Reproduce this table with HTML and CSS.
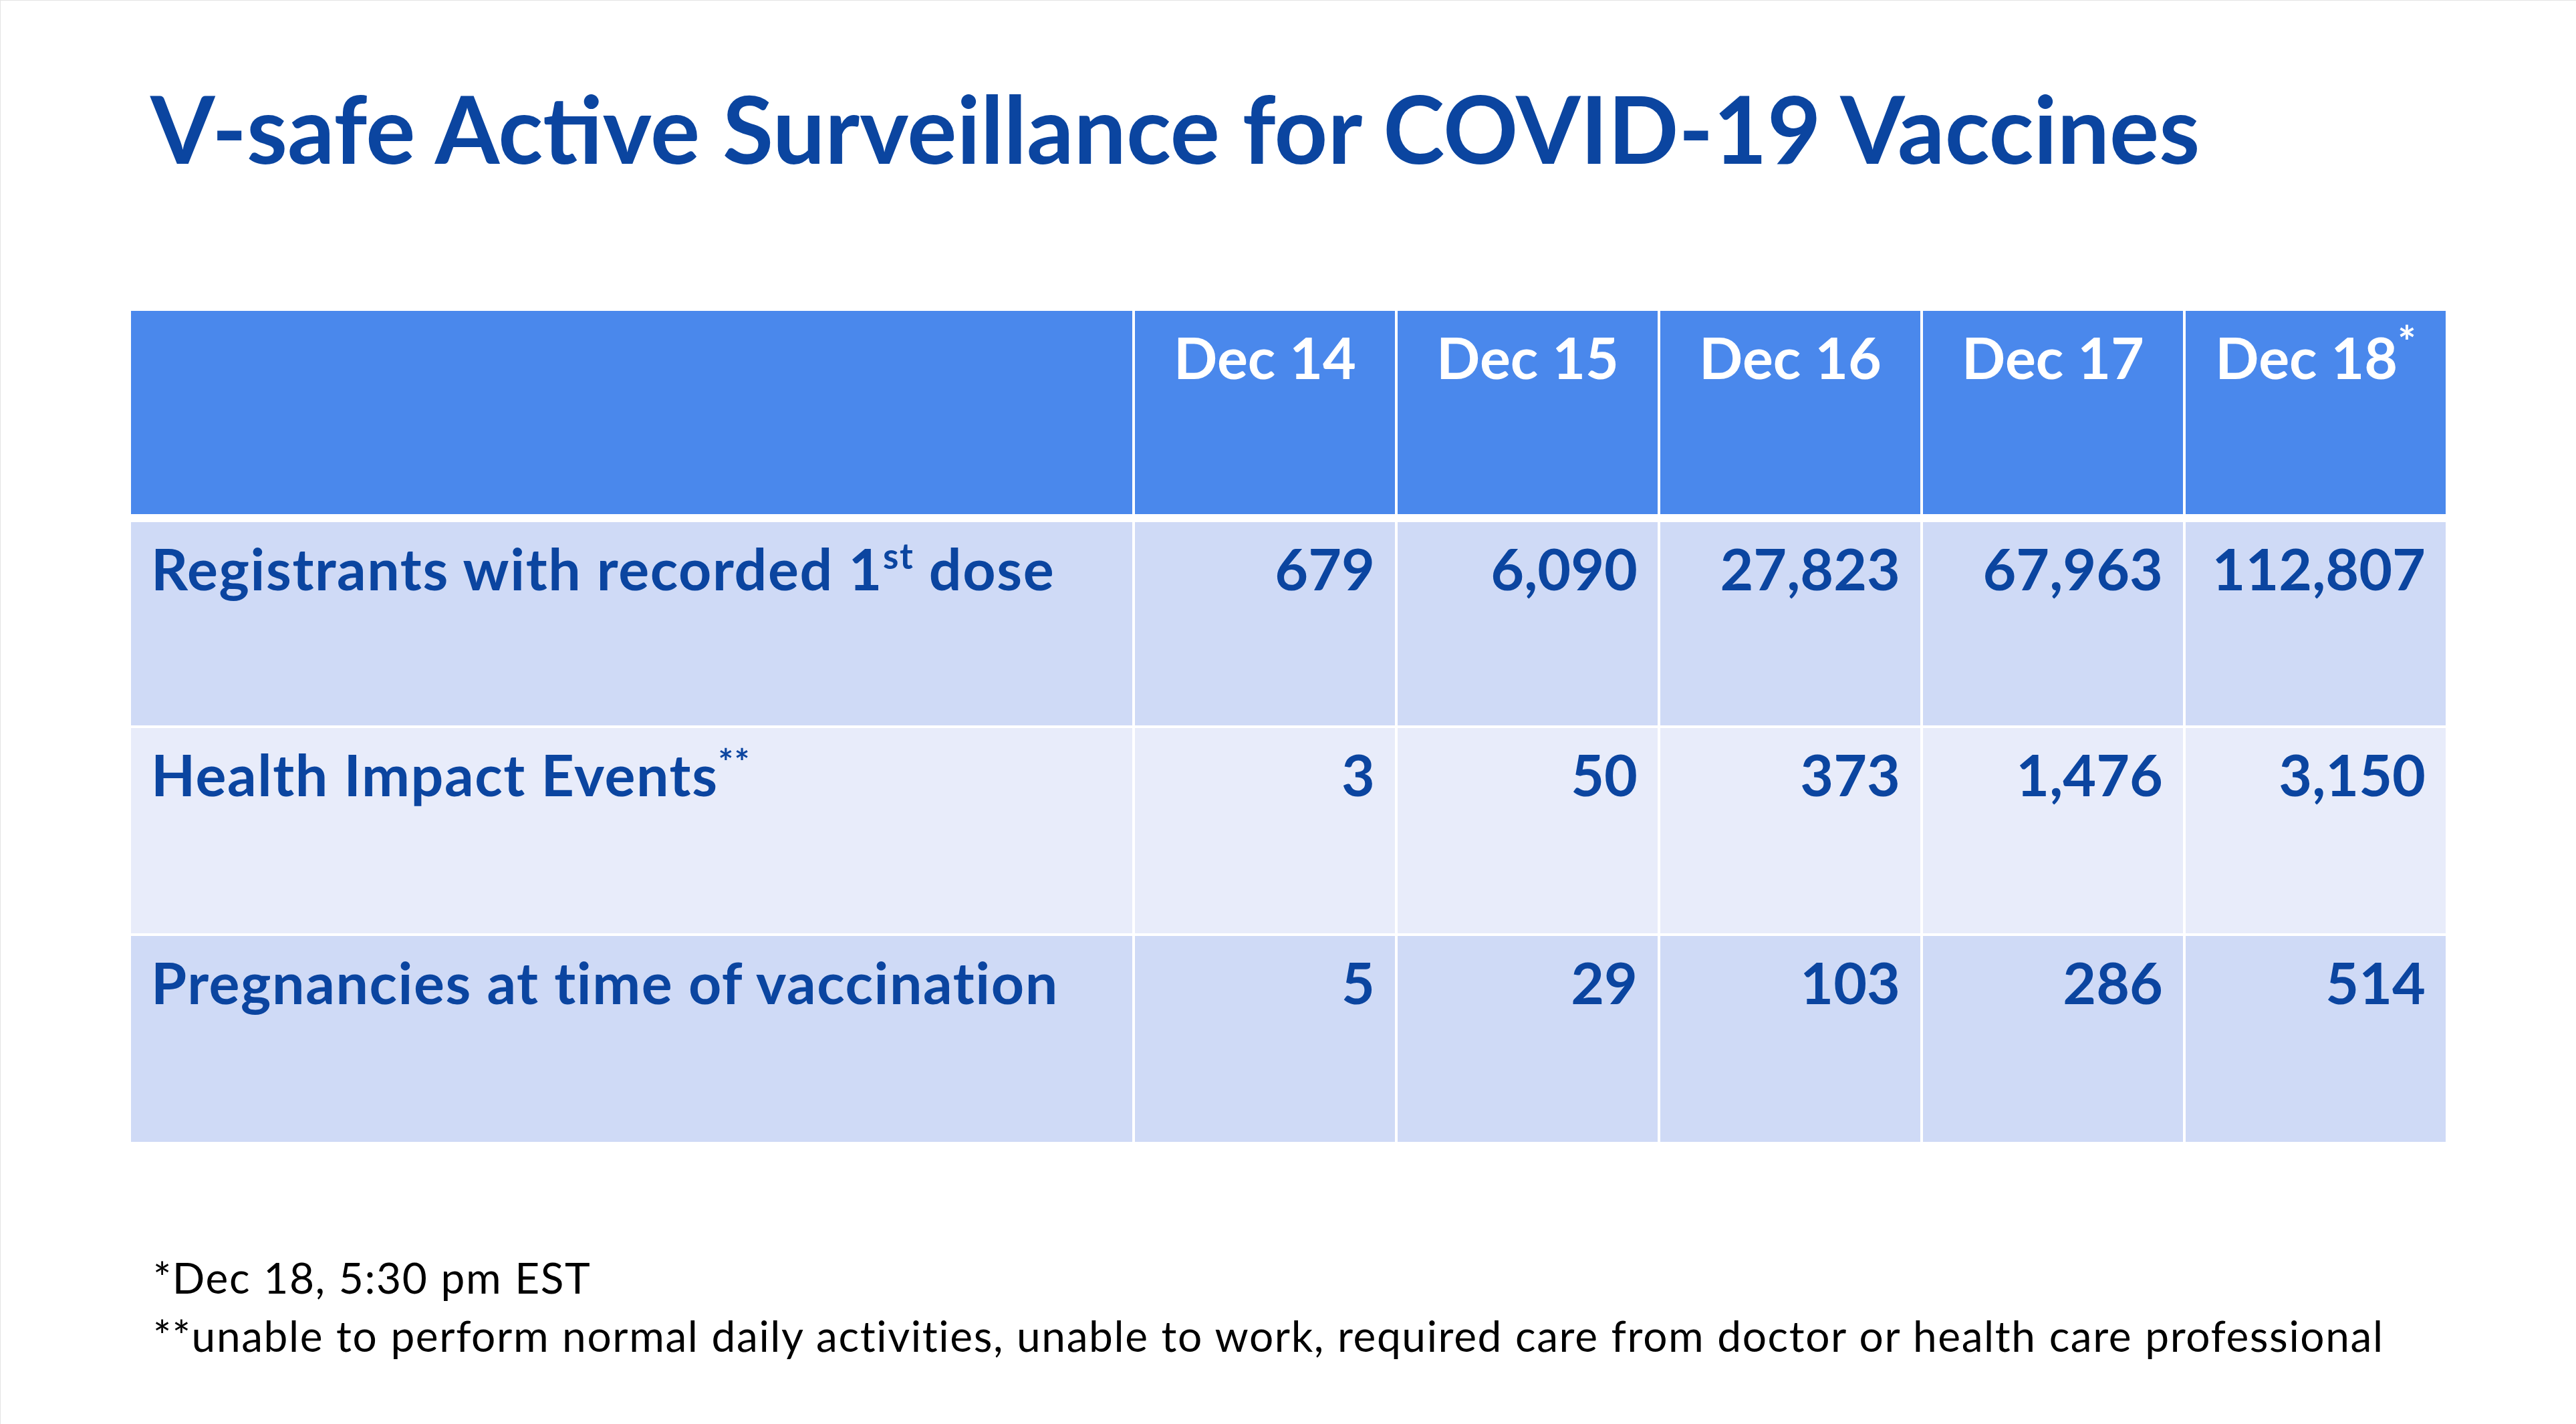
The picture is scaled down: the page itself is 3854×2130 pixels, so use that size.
FILE: index.html
```html
<!DOCTYPE html>
<html lang="en">
<head>
<meta charset="utf-8">
<title>V-safe Active Surveillance for COVID-19 Vaccines</title>
<link rel="stylesheet" href="styles.css">
</head>
<body>
<div class="slide">
  <h1 class="title">V-safe Active Surveillance for COVID-19 Vaccines</h1>
  <div class="table">
    <div class="row head">
      <div class="cell label"></div>
      <div class="cell">Dec 14</div>
      <div class="cell">Dec 15</div>
      <div class="cell">Dec 16</div>
      <div class="cell">Dec 17</div>
      <div class="cell">Dec 18<sup>*</sup></div>
    </div>
    <div class="row body r1">
      <div class="cell label">Registrants with recorded 1<sup>st</sup> dose</div>
      <div class="cell num">679</div>
      <div class="cell num">6,090</div>
      <div class="cell num">27,823</div>
      <div class="cell num">67,963</div>
      <div class="cell num">112,807</div>
    </div>
    <div class="row body r2">
      <div class="cell label">Health Impact Events<sup>**</sup></div>
      <div class="cell num">3</div>
      <div class="cell num">50</div>
      <div class="cell num">373</div>
      <div class="cell num">1,476</div>
      <div class="cell num">3,150</div>
    </div>
    <div class="row body r3">
      <div class="cell label">Pregnancies at time of vaccination</div>
      <div class="cell num">5</div>
      <div class="cell num">29</div>
      <div class="cell num">103</div>
      <div class="cell num">286</div>
      <div class="cell num">514</div>
    </div>
  </div>
  <div class="notes">
    <p>*Dec 18, 5:30 pm EST</p>
    <p>**unable to perform normal daily activities, unable to work, required care from doctor or health care professional</p>
  </div>
</div>
</body>
</html>
```

FILE: styles.css
```css
html, body {
  margin: 0;
  padding: 0;
  background: #ffffff;
}

.slide {
  width: 3854px;
  height: 2130px;
  box-sizing: border-box;
  border-top: 1px solid #e4e4e4;
  border-left: 1px solid #e4e4e4;
  padding-top: 110px;
  font-family: "Lato", "Noto Sans", sans-serif;
  overflow: hidden;
}

.title {
  margin: 0 0 0 224px;
  font-size: 139px;
  line-height: 162px;
  font-weight: 700;
  color: #0b45a0;
}

.table {
  margin: 192px 0 0 195px;
  width: 3463px;
  display: flex;
  flex-direction: column;
  gap: 4px;
  background: #ffffff;
}

.row {
  display: grid;
  grid-template-columns: 1498px repeat(5, 1fr);
  column-gap: 4px;
  height: 304px;
}

.row.head {
  margin-bottom: 8px;
}

.row.r2 { height: 307px; }
.row.r3 { height: 308px; }

.cell {
  box-sizing: border-box;
  padding: 17px 30px 0 30px;
  font-size: 86px;
  line-height: 103px;
  font-weight: 700;
  white-space: nowrap;
}

.cell.label {
  letter-spacing: 1.6px;
}

.head .cell {
  background: #4a88ec;
  color: #ffffff;
  text-align: center;
  padding-left: 0;
  padding-right: 0;
}

.r1 .cell, .r3 .cell {
  background: #cfdaf6;
  color: #0b45a0;
}

.r2 .cell {
  background: #e8ecfa;
  color: #0b45a0;
}

.cell.num {
  text-align: right;
}

.cell sup {
  font-size: 0.62em;
  line-height: 0;
  vertical-align: 0.6em;
}

.head .cell sup {
  font-size: 0.75em;
  vertical-align: 0.5em;
}

.notes {
  margin: 159px 0 0 228px;
  font-size: 64px;
  line-height: 87px;
  letter-spacing: 1.6px;
  word-spacing: 1px;
  color: #000000;
}

.notes p {
  margin: 0;
}
```
